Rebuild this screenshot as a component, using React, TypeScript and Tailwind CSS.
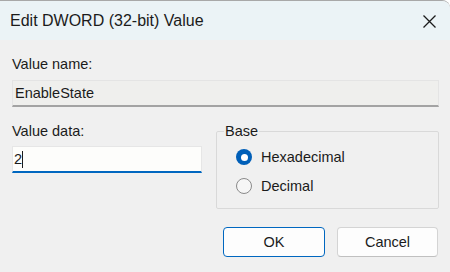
import React from "react";

export default function App() {
  return (
    <div
      className="w-[450px] h-[272px] bg-[#f0f0f0] flex flex-col overflow-hidden border-t border-[#a8a8a8] rounded-tr-[8px] text-[#1b1b1b]"
      style={{ fontFamily: '"Liberation Sans", Arial, sans-serif' }}
    >
      <div className="h-[39px] bg-[#ebf3f6] flex items-center justify-between pl-[10px] pr-[13px] shrink-0">
        <span className="text-[16px] leading-none pt-[1px]">Edit DWORD (32-bit) Value</span>
        <svg width="15" height="15" viewBox="0 0 15 15" className="mt-[1px]">
          <path d="M1.5 1.5 L13.5 13.5 M13.5 1.5 L1.5 13.5" stroke="#1b1b1b" strokeWidth="1.3" fill="none" />
        </svg>
      </div>

      <div className="flex flex-col pl-[12px] pr-[11px] text-[14.5px] leading-[18px]">
        <div className="mt-[15px]">Value name:</div>
        <div className="mt-[7px] h-[27px] border border-[#e4e4e4] border-b-2 border-b-[#a3a3a3] bg-[#efefed] flex items-center pl-[2px]">
          EnableState
        </div>

        <div className="mt-[15px] flex gap-[14px]">
          <div className="w-[190px] flex flex-col">
            <div>Value data:</div>
            <div className="mt-[6px] h-[27px] bg-[#fdfdfb] border-x border-t border-[#e6e6e6] border-b-2 border-b-[#0067c0] flex items-center pl-[1px]">
              <span>2</span>
              <span className="w-[1px] h-[17px] bg-[#1b1b1b]" />
            </div>
          </div>

          <fieldset className="flex-1 h-[87px] border border-[#d9d9d9] rounded-[2px]">
            <legend className="ml-[7px] px-[1px]">Base</legend>
            <div className="flex flex-col mt-[8px] gap-[11px] pl-[19px]">
              <label className="flex items-center gap-[9px]">
                <span className="w-[16px] h-[16px] rounded-full bg-[#005fb8] flex items-center justify-center">
                  <span className="w-[7px] h-[7px] rounded-full bg-white" />
                </span>
                <span>Hexadecimal</span>
              </label>
              <label className="flex items-center gap-[9px]">
                <span className="w-[16px] h-[16px] rounded-full border border-[#8a8a8a] bg-[#f6f6f6]" />
                <span>Decimal</span>
              </label>
            </div>
          </fieldset>
        </div>

        <div className="mt-[18px] flex justify-end gap-[12px] pr-[1px]">
          <button className="w-[102px] h-[30px] rounded-[4px] border border-[#0067c0] bg-[#fdfdfd] text-[14.5px]">
            OK
          </button>
          <button className="w-[101px] h-[30px] rounded-[4px] border border-[#d4d4d4] border-b-[#c0c0c0] bg-[#fdfdfd] text-[14.5px]">
            Cancel
          </button>
        </div>
      </div>
    </div>
  );
}
